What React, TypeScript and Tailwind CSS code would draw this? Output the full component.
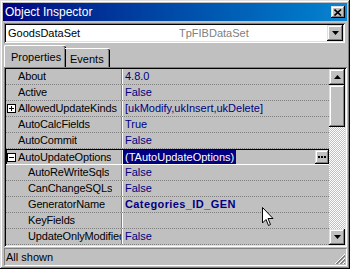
import React from 'react';

type Prop = {
  name: string;
  value: string;
  sub?: boolean;
  box?: '+' | '-';
  bold?: boolean;
  selected?: boolean;
};

const props: Prop[] = [
  { name: 'About', value: '4.8.0' },
  { name: 'Active', value: 'False' },
  { name: 'AllowedUpdateKinds', value: '[ukModify,ukInsert,ukDelete]', box: '+' },
  { name: 'AutoCalcFields', value: 'True' },
  { name: 'AutoCommit', value: 'False' },
  { name: 'AutoUpdateOptions', value: '(TAutoUpdateOptions)', box: '-', selected: true },
  { name: 'AutoReWriteSqls', value: 'False', sub: true },
  { name: 'CanChangeSQLs', value: 'False', sub: true },
  { name: 'GeneratorName', value: 'Categories_ID_GEN', sub: true, bold: true },
  { name: 'KeyFields', value: '', sub: true },
  { name: 'UpdateOnlyModifiedFields', value: 'False', sub: true },
];

const raised =
  'shadow-[inset_-1px_-1px_#000,inset_1px_1px_#dfdfdf,inset_-2px_-2px_#808080,inset_2px_2px_#fff]';
const sunken =
  'shadow-[inset_1px_1px_#808080,inset_-1px_-1px_#fff,inset_2px_2px_#000,inset_-2px_-2px_#dfdfdf]';

const Arrow = ({ up }: { up?: boolean }) => (
  <svg width="7" height="4" viewBox="0 0 7 4">
    <path d={up ? 'M3.5 0 L7 4 L0 4 Z' : 'M0 0 L7 0 L3.5 4 Z'} fill="#000" />
  </svg>
);

const ExpandBox = ({ kind }: { kind: '+' | '-' }) => (
  <svg width="9" height="9" viewBox="0 0 9 9" className="shrink-0">
    <rect x="0.5" y="0.5" width="8" height="8" fill="#fff" stroke="#000" />
    <path d="M2 4.5 H7" stroke="#000" />
    {kind === '+' && <path d="M4.5 2 V7" stroke="#000" />}
  </svg>
);

const PropRow = ({ p }: { p: Prop }) => (
  <div
    className={`flex h-[16px] ${
      p.selected
        ? 'border-t border-t-black border-b border-b-white shadow-[inset_1px_0_#000]'
        : 'border-b border-dotted border-[#808080]'
    }`}
  >
    <div
      className={`w-[115px] shrink-0 flex items-center overflow-hidden whitespace-nowrap tracking-[-0.15px] ${
        p.sub ? 'pl-[22px]' : p.box ? 'pl-[1px] gap-[2px]' : 'pl-[12px]'
      }`}
    >
      {p.box && <ExpandBox kind={p.box} />}
      <span className="overflow-hidden">{p.name}</span>
    </div>
    <div className="w-px bg-[#808080] shrink-0" />
    <div className="w-px bg-white shrink-0" />
    <div className="flex-1 flex items-center whitespace-nowrap overflow-hidden text-[#000080]">
      {p.selected ? (
        <>
          <span className="bg-[#000080] text-white h-full flex items-center px-[2px]">{p.value}</span>
          <div className={`ml-auto w-[14px] h-full ${raised} bg-[#c0c0c0] flex items-center justify-center`}>
            <span className="flex gap-px">
              <span className="w-[2px] h-[2px] bg-black" />
              <span className="w-[2px] h-[2px] bg-black" />
              <span className="w-[2px] h-[2px] bg-black" />
            </span>
          </div>
        </>
      ) : (
        <span className={`pl-[2px] ${p.bold ? 'font-bold tracking-[0.4px]' : ''}`}>{p.value}</span>
      )}
    </div>
  </div>
);

export default function App() {
  return (
    <div
      className={`relative w-[350px] h-[269px] bg-[#c0c0c0] ${raised} p-[3px] flex flex-col text-[11px] text-black font-['Liberation_Sans',Arial,sans-serif] overflow-hidden select-none`}
    >
      {/* caption */}
      <div className="h-[18px] bg-linear-to-r from-[#000080] to-[#1084d0] flex items-center pl-[2px] pr-[2px] text-white">
        <span className="text-[12px]">Object Inspector</span>
        <div className={`ml-auto w-[14px] h-[12px] bg-[#c0c0c0] ${raised} flex items-center justify-center`}>
          <svg width="8" height="7" viewBox="0 0 8 7">
            <path d="M0.5 0.5 L7 6.5 M7 0.5 L0.5 6.5" stroke="#000" strokeWidth="1.6" />
          </svg>
        </div>
      </div>

      {/* component combo */}
      <div className={`mt-[2px] ml-px mr-[2px] h-[20px] bg-white ${sunken} p-[2px] flex items-stretch`}>
        <div className="flex-1 flex items-center pl-[2px]">
          <span className="w-[171px]">GoodsDataSet</span>
          <span className="text-[#808080]">TpFIBDataSet</span>
        </div>
        <div className={`w-[16px] bg-[#c0c0c0] ${raised} flex items-center justify-center`}>
          <Arrow />
        </div>
      </div>

      {/* tabs */}
      <div className="mt-[2px] h-[22px] flex items-end pl-px">
        <div className="h-[22px] w-[62px] border-t border-l border-white rounded-tl-[2px] rounded-tr-[2px] shadow-[inset_-1px_0_#000,inset_-2px_0_#808080] flex items-start pt-[3px] pl-[6px]">
          Properties
        </div>
        <div className="h-[19px] w-[45px] border-t border-white rounded-tr-[2px] shadow-[inset_-1px_0_#000,inset_-2px_0_#808080] flex items-start pt-[2px] pl-[5px] -ml-px">
          Events
        </div>
      </div>

      {/* property grid */}
      <div className={`h-[180px] ml-px ${sunken} p-[2px] flex`}>
        <div className="flex-1 flex flex-col overflow-hidden">
          {props.map((p) => (
            <PropRow key={p.name} p={p} />
          ))}
        </div>
        <div className="w-[16px] flex flex-col">
          <div className={`h-[16px] bg-[#c0c0c0] ${raised} flex items-center justify-center`}>
            <Arrow up />
          </div>
          <div className={`h-[42px] bg-[#c0c0c0] ${raised}`} />
          <div className="flex-1 bg-[repeating-conic-gradient(#c0c0c0_0_25%,#ffffff_0_50%)] bg-[length:2px_2px]" />
          <div className={`h-[16px] bg-[#c0c0c0] ${raised} flex items-center justify-center`}>
            <Arrow />
          </div>
        </div>
      </div>

      {/* status */}
      <div className="mt-px ml-px h-[18px] border border-t-[#808080] border-l-[#808080] border-b-white border-r-white flex items-center pl-[1px] relative">
        All shown
        <svg width="12" height="12" viewBox="0 0 12 12" className="absolute right-0 bottom-0">
          <path d="M11 1 L1 11 M11 5 L5 11 M11 9 L9 11" stroke="#fff" />
          <path d="M11 2 L2 11 M11 3 L3 11 M11 6 L6 11 M11 7 L7 11 M11 10 L10 11" stroke="#808080" />
        </svg>
      </div>

      {/* mouse pointer */}
      <svg width="12" height="20" viewBox="0 0 12 20" className="absolute left-[262px] top-[207px]">
        <path
          d="M0.5 0.5 L0.5 16 L4 12.5 L6.5 18.5 L8.5 17.5 L6 11.5 L11 11.5 Z"
          fill="#fff"
          stroke="#000"
          strokeLinejoin="miter"
        />
      </svg>
    </div>
  );
}
